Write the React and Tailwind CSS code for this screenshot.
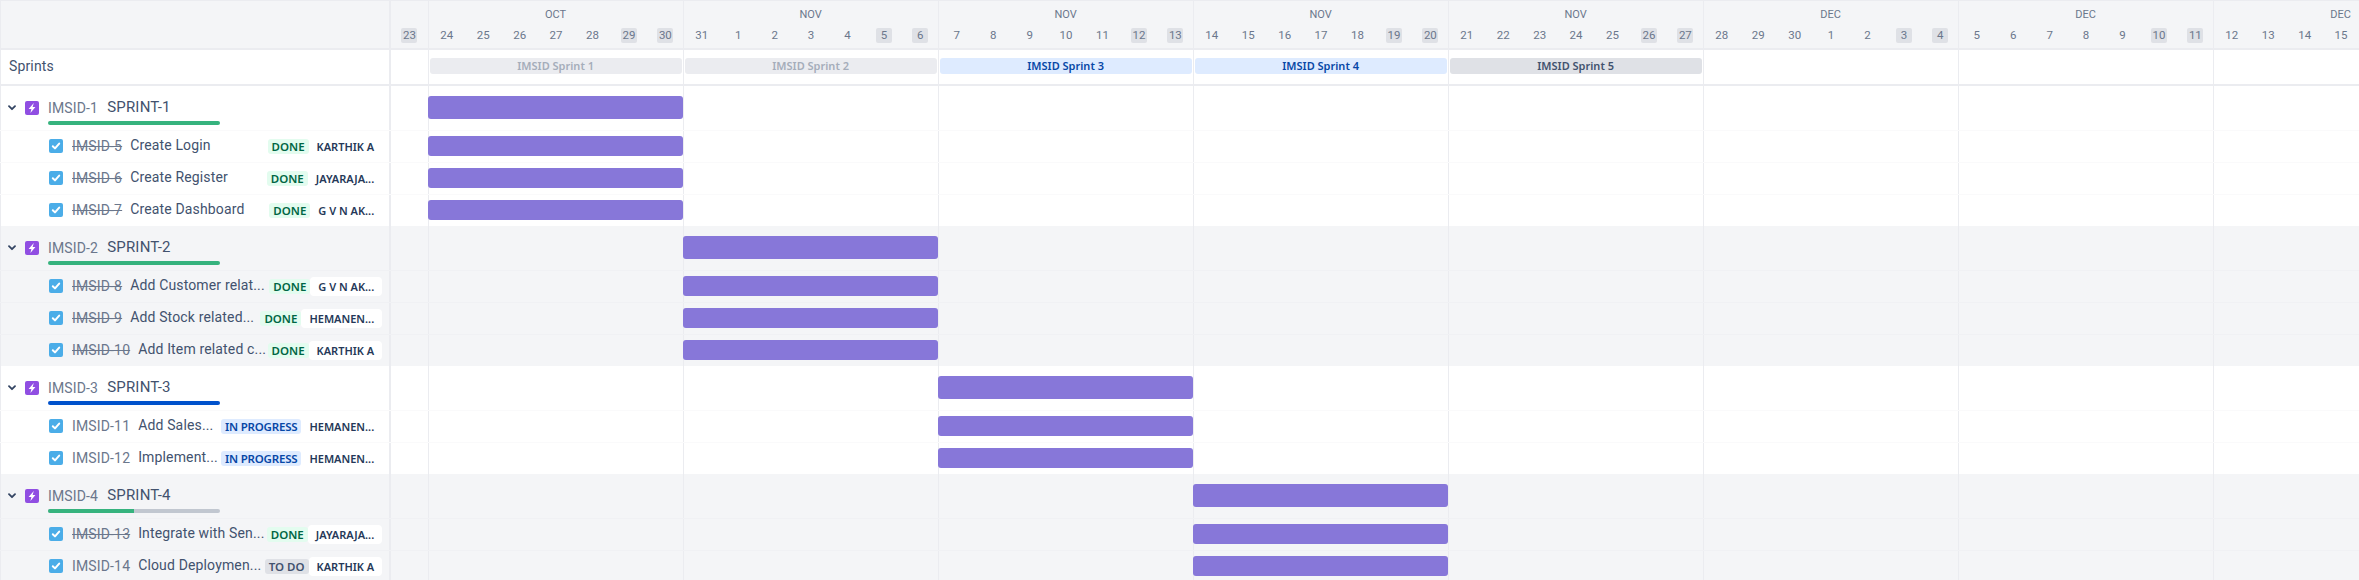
import clsx from 'clsx'

const DAY_CELL = 'w-[36.43px]'

const weeks = [
  { month: 'OCT', days: [24, 25, 26, 27, 28, 29, 30] },
  { month: 'NOV', days: [31, 1, 2, 3, 4, 5, 6] },
  { month: 'NOV', days: [7, 8, 9, 10, 11, 12, 13] },
  { month: 'NOV', days: [14, 15, 16, 17, 18, 19, 20] },
  { month: 'NOV', days: [21, 22, 23, 24, 25, 26, 27] },
  { month: 'DEC', days: [28, 29, 30, 1, 2, 3, 4] },
  { month: 'DEC', days: [5, 6, 7, 8, 9, 10, 11] },
  { month: 'DEC', days: [12, 13, 14, 15, 16, 17, 18] },
]

const sprints = [
  { name: 'IMSID Sprint 1', style: 'bg-[#ebecf0] text-[#a5adba]' },
  { name: 'IMSID Sprint 2', style: 'bg-[#ebecf0] text-[#a5adba]' },
  { name: 'IMSID Sprint 3', style: 'bg-[#deebff] text-[#0747a6]' },
  { name: 'IMSID Sprint 4', style: 'bg-[#deebff] text-[#0747a6]' },
  { name: 'IMSID Sprint 5', style: 'bg-[#dfe1e6] text-[#42526e]' },
]

const epics = [
  {
    id: 'IMSID-1', name: 'SPRINT-1', week: 0, shaded: false, progress: 'done',
    issues: [
      { id: 'IMSID-5', title: 'Create Login', status: 'DONE', who: 'KARTHIK A', struck: true },
      { id: 'IMSID-6', title: 'Create Register', status: 'DONE', who: 'JAYARAJA...', struck: true },
      { id: 'IMSID-7', title: 'Create Dashboard', status: 'DONE', who: 'G V N AK...', struck: true },
    ],
  },
  {
    id: 'IMSID-2', name: 'SPRINT-2', week: 1, shaded: true, progress: 'done',
    issues: [
      { id: 'IMSID-8', title: 'Add Customer relat...', status: 'DONE', who: 'G V N AK...', struck: true },
      { id: 'IMSID-9', title: 'Add Stock related...', status: 'DONE', who: 'HEMANEN...', struck: true },
      { id: 'IMSID-10', title: 'Add Item related c...', status: 'DONE', who: 'KARTHIK A', struck: true },
    ],
  },
  {
    id: 'IMSID-3', name: 'SPRINT-3', week: 2, shaded: false, progress: 'active',
    issues: [
      { id: 'IMSID-11', title: 'Add Sales...', status: 'IN PROGRESS', who: 'HEMANEN...' },
      { id: 'IMSID-12', title: 'Implement...', status: 'IN PROGRESS', who: 'HEMANEN...' },
    ],
  },
  {
    id: 'IMSID-4', name: 'SPRINT-4', week: 3, shaded: true, progress: 'half',
    issues: [
      { id: 'IMSID-13', title: 'Integrate with Sen...', status: 'DONE', who: 'JAYARAJA...', struck: true },
      { id: 'IMSID-14', title: 'Cloud Deploymen...', status: 'TO DO', who: 'KARTHIK A' },
    ],
  },
]

const lozenges = {
  DONE: 'bg-[#e3fcef] text-[#006644]',
  'IN PROGRESS': 'bg-[#deebff] text-[#0747a6] tracking-[-0.2px]',
  'TO DO': 'bg-[#dfe1e6] text-[#42526e]',
}

function EpicIcon() {
  return (
    <svg width="14" height="14" viewBox="0 0 14 14" className="shrink-0">
      <rect width="14" height="14" rx="2" fill="#904ee2" />
      <path d="M8.8 2 3.6 7.9h2.8L5.4 12l5-6H7.6z" fill="#fff" />
    </svg>
  )
}

function TaskIcon() {
  return (
    <svg width="14" height="14" viewBox="0 0 14 14" className="shrink-0">
      <rect width="14" height="14" rx="2" fill="#4bade8" />
      <path d="M3.8 7.2 6 9.4l4.2-4.8" fill="none" stroke="#fff" strokeWidth="2" strokeLinecap="round" strokeLinejoin="round" />
    </svg>
  )
}

function Chevron() {
  return (
    <svg width="8" height="6" viewBox="0 0 8 6" className="shrink-0">
      <path d="M1 1.2 4 4.2l3-3" fill="none" stroke="#344563" strokeWidth="1.8" strokeLinecap="round" strokeLinejoin="round" />
    </svg>
  )
}

function Progress({ kind }) {
  return (
    <div className="flex h-[4px] w-[172px] overflow-hidden rounded-full bg-[#c1c7d0]">
      {kind === 'done' && <div className="w-full bg-[#36b37e]" />}
      {kind === 'active' && <div className="w-full bg-[#0052cc]" />}
      {kind === 'half' && <div className="w-1/2 bg-[#36b37e]" />}
    </div>
  )
}

// gutter cell + one cell per week, the bar sits in the week it belongs to
function TimelineCells({ week, barClass }) {
  return (
    <>
      <div className={clsx(DAY_CELL, 'shrink-0')} />
      {weeks.map((_, i) => (
        <div key={i} className="w-[255px] shrink-0 border-l border-[#ebecf0]">
          {i === week && <div className={clsx('-ml-[1px] w-[255px] rounded-[3px] bg-[#8777d9]', barClass)} />}
        </div>
      ))}
    </>
  )
}

function EpicRow({ epic }) {
  return (
    <div className="flex h-[44px]">
      <div className="flex w-[391.2px] shrink-0 border-r-2 border-l border-[#ebecf0]">
        <div className="flex h-[44px] w-[47px] shrink-0 items-center gap-[9px] pt-[1px] pl-[7px]">
          <Chevron />
          <EpicIcon />
        </div>
        <div className="pt-[11px]">
          <div className="flex h-[24px] items-start gap-[9px] leading-[20px]">
            <span className="mt-[1px] text-[14px] tracking-[0.15px] text-[#6b778c]">{epic.id}</span>
            <span className="text-[15px] tracking-[0.2px] text-[#42526e]">{epic.name}</span>
          </div>
          <Progress kind={epic.progress} />
        </div>
      </div>
      <TimelineCells week={epic.week} barClass="mt-[10px] h-[23px]" />
    </div>
  )
}

function IssueRow({ issue, week, shaded }) {
  return (
    <div className={clsx('flex h-[32px] border-t', shaded ? 'border-[#f0f1f4]' : 'border-[#fafafb]')}>
      <div className="flex w-[391.2px] shrink-0 items-center border-r-2 border-l border-[#ebecf0] pr-[7px] pl-[48px]">
        <TaskIcon />
        <span className={clsx('ml-[9px] shrink-0 text-[14px] tracking-[0.15px] text-[#6b778c]', issue.struck && 'line-through')}>{issue.id}</span>
        <span className="mb-[1px] ml-[8px] min-w-0 flex-1 truncate text-[14px] tracking-[0.15px] text-[#42526e]">{issue.title}</span>
        <span className={clsx("shrink-0 rounded-[3px] px-[4px] font-['Noto_Sans',sans-serif] text-[11.5px] leading-[15px] font-semibold", lozenges[issue.status])}>{issue.status}</span>
        <span className={clsx("mt-[1px] shrink-0 rounded-[4px] px-[8px] font-['Noto_Sans',sans-serif] text-[11px] leading-[19px] font-semibold text-[#253858]", shaded ? 'bg-white' : '')}>{issue.who}</span>
      </div>
      <TimelineCells week={week} barClass="mt-[5px] h-[20px]" />
    </div>
  )
}

export default function App() {
  return (
    <div className="h-[580px] w-[2359px] overflow-hidden bg-white font-['Roboto',sans-serif]">
      {/* Month and day header */}
      <div className="flex h-[50px] border-t border-b-2 border-[#ebecf0] bg-[#f4f5f7]">
        <div className="w-[391.2px] shrink-0 border-r-2 border-l border-[#ebecf0]" />
        <div className={clsx(DAY_CELL, 'flex shrink-0 justify-center pt-[27px]')}>
          <span className="h-[15px] w-[16px] rounded-[2px] bg-[#dfe1e6] text-center text-[11.5px] leading-[15px] text-[#6b778c]">23</span>
        </div>
        {weeks.map((week, i) => (
          <div key={i} className="w-[255px] shrink-0 border-l border-[#ebecf0]">
            <div className="pt-[6px] text-center text-[11px] leading-[16px] text-[#6b778c]">{week.month}</div>
            <div className="mt-[5px] flex">
              {week.days.map((day, d) => (
                <div key={d} className="flex w-[36.43px] shrink-0 justify-center">
                  <span className={clsx('h-[15px] min-w-[16px] rounded-[2px] text-center text-[11.5px] leading-[15px] text-[#6b778c]', d > 4 && 'bg-[#dfe1e6]')}>{day}</span>
                </div>
              ))}
            </div>
          </div>
        ))}
      </div>

      {/* Sprints row */}
      <div className="flex h-[35.6px] border-b-2 border-[#ebecf0]">
        <div className="w-[391.2px] shrink-0 border-r-2 border-l border-[#ebecf0] pt-[6px] pl-[8px] text-[14px] leading-[20px] tracking-[0.15px] text-[#42526e]">Sprints</div>
        <div className={clsx(DAY_CELL, 'shrink-0')} />
        {weeks.map((_, i) => (
          <div key={i} className="w-[255px] shrink-0 border-l border-[#ebecf0] pt-[8px] pr-[1px] pl-[1px]">
            {sprints[i] && (
              <div className={clsx("h-[16px] rounded-[3px] text-center font-['Noto_Sans',sans-serif] text-[11px] leading-[16px] font-semibold", sprints[i].style)}>{sprints[i].name}</div>
            )}
          </div>
        ))}
      </div>

      {/* Epics and their issues */}
      {epics.map((epic) => (
        <div key={epic.id} className={epic.shaded ? 'bg-[#f4f5f7]' : 'bg-white'}>
          <EpicRow epic={epic} />
          {epic.issues.map((issue) => (
            <IssueRow key={issue.id} issue={issue} week={epic.week} shaded={epic.shaded} />
          ))}
        </div>
      ))}
    </div>
  )
}
